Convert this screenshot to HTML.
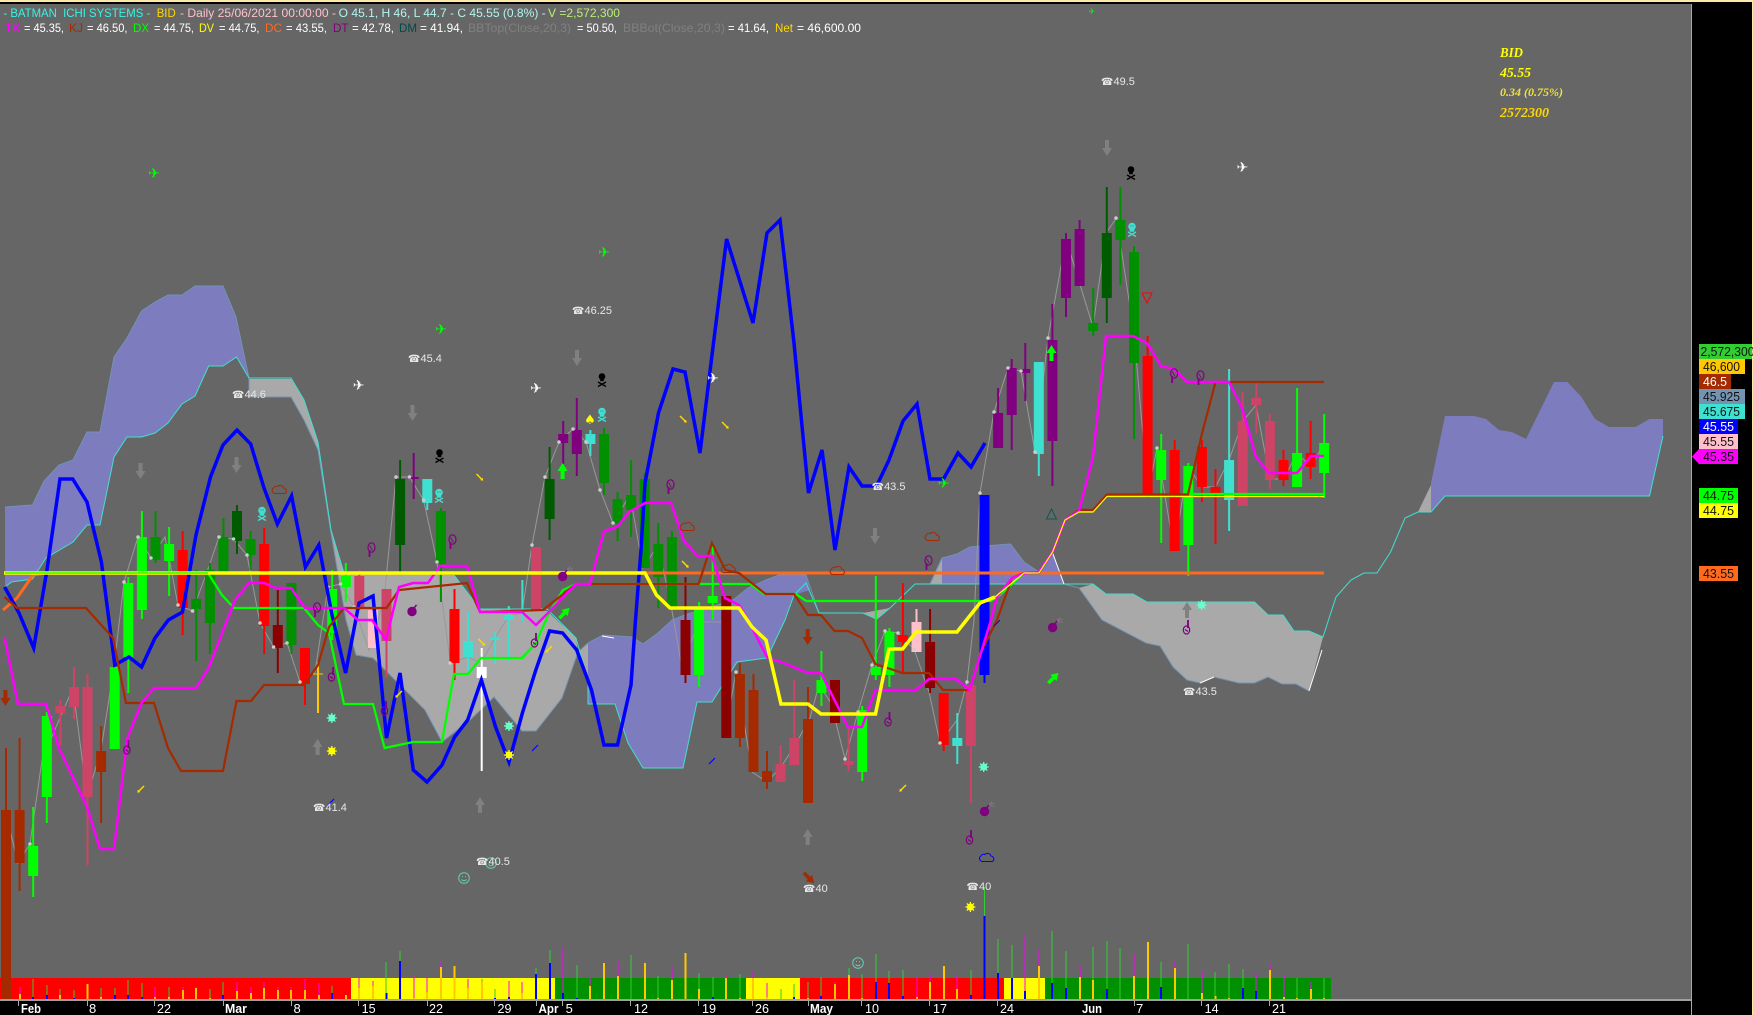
<!DOCTYPE html>
<html><head><meta charset="utf-8"><title>BATMAN ICHI SYSTEMS</title>
<style>
html,body{margin:0;padding:0;background:#666;width:1753px;height:1015px;overflow:hidden}
svg{display:block}
text{font-family:"Liberation Sans","DejaVu Sans",sans-serif}
.h{font-size:12px}
.ax{font-size:13px;fill:#fff}
.axb{font-size:13px;fill:#fff;font-weight:bold}
.p{font-size:11px;fill:#e8e8e8}
.l{font-size:13px}
.s{font-family:"Liberation Serif",serif;font-style:italic;font-weight:bold;font-size:14px}
.g{font-family:"DejaVu Sans",sans-serif}
</style></head><body>
<svg width="1753" height="1015" viewBox="0 0 1753 1015" xmlns="http://www.w3.org/2000/svg">
<defs>
<path id="dn" d="M-2-8h4v8h3l-5 8-5-8h3z"/>
<path id="ar" d="M-2 8v-8h-3l5-8 5 8h-3v8z"/>
<path id="cl" fill="none" stroke-width="1" d="M-4 4.500a3 3 0 0 1-1.500-5.500a3 3 0 0 1 4-1.500a3.500 3.500 0 0 1 6 1.500a3 3 0 0 1 1.500 5.500z"/>
<g id="bomb"><circle cx="0" cy="1.500" r="4.700" fill="#800080"/><path d="M2-2l2.500-3" stroke="#800080" stroke-width="1.600"/><path d="M5-5l5-2M5-4l6 0M5-6l3-3" stroke="#a890a8" stroke-width=".8" stroke-dasharray="1 1" fill="none"/></g>
<g id="star"><circle r="3"/><path stroke-width="1.300" d="M0-5V5M-5 0H5M-3.600-3.600L3.600 3.600M-3.600 3.600L3.600-3.600"/></g>
<g id="smile" fill="none" stroke="#66cdaa" stroke-width="1"><circle r="5.300"/><path d="M-2.500 1.500q2.500 2.500 5 0"/><path d="M-2-1.500h1M1-1.500h1"/></g>
<g id="hand" fill="none" stroke="#800080" stroke-width="1.200"><ellipse cx="-.5" cy="3" rx="3.200" ry="4"/><path d="M1-7v8" stroke-width="1.800"/><path d="M-2 2.500l3 2"/></g>
<g id="mush" fill="none" stroke="#800080" stroke-width="1.200"><ellipse cx=".5" cy="-2.500" rx="3.500" ry="4.700"/><path d="M-1.500-4.500l3 5" stroke-width=".8"/><path d="M-1.500 0v7" stroke-width="1.800"/></g>
<g id="ya"><path d="M-3-3L3 3" stroke-width="1.500"/><path d="M1 3l2.500.5L3 1z" stroke-width=".5"/></g>
<g id="ba"><path d="M-3 3L3-3" stroke-width="1.100"/></g>
<g id="sk"><circle cy="-3.500" r="3.300"/><rect x="-1.800" y="-1" width="3.600" height="2.200"/><path fill="none" stroke-width="1.300" d="M-4 2L4 6.500M4 2L-4 6.500"/></g>
<g id="sk2"><circle cy="-3.500" r="3.300"/><rect x="-1.800" y="-1" width="3.600" height="2.200"/><path fill="none" stroke-width="1.300" d="M-4 2L4 6.500M4 2L-4 6.500"/><path d="M-1.500-4h.8M.7-4h.8" stroke="#666" stroke-width="1.300" fill="none"/></g>
</defs>
<rect width="1753" height="1015" fill="#666"/>

<!-- Ichimoku clouds -->
<g stroke="none">
<polygon fill="#7c7cbe" points="5,507 32.500,505 44,481 59,465 73,460 87,432 100,432 114,357 127,338 141.600,311 155,302 168,295 182,295 195,286 223,286 236,317 249,378 236.500,357 223,366 208.600,366 195,396 182,404 168,423 155,433 141.600,437 127,437 114,457 100,525 87,525 73,542 46,558 32.500,579 11.500,582 5,587"/>
<polygon fill="#a9a9a9" points="249,379 291,379 304,400 318,442 331,530 344,573 454,575 480,609 547,611 576,638 578,652 562,698 536,731 522,731 494,697 470,720 442,742 425,710 402,687 373,658 356,655 346,620 331,533 318,450 304,420 291,397 249,397"/>
<polygon fill="#a9a9a9" points="578,652 588,643 588,680"/>
<polygon fill="#7c7cbe" points="588,643 603,635 632,637 643,644 658,633 672,620 685,615 733,600 748,588 766,580 779,575 806,575 810,590 794,595 785,620 767,658 737,662 712,702 697,702 683,768 643,768 628,743 615,704 588,704"/>
<polygon fill="#a9a9a9" points="863,613 876.600,619 890,608"/>
<polygon fill="#a9a9a9" points="930,584 942,558 942,584"/>
<polygon fill="#7c7cbe" points="942,558 957,554 970,547 1010.500,544 1024,562 1039,572 1052.600,553 1064,584 942,584"/>
<polygon fill="#a9a9a9" points="1093,584 1106,594 1133,594 1147,602 1254.500,602 1268,615 1283,615 1294,631 1309,631 1323,637 1309,691 1296,684 1282,684 1268,677 1254.500,683 1239,683 1214,677 1200,683 1187,680 1173,667 1160,646 1146,643 1102,620 1079,588"/>
<polygon fill="#a9a9a9" points="1418,512 1431,485 1431,512"/>
<polygon fill="#7c7cbe" points="1431,483 1445,416 1474,416 1486,419 1499,430 1512,432 1526,439 1554,382 1567.500,382 1581.500,397 1595,419 1609,427 1635.500,427 1649.500,419 1663,419 1663,436 1649.500,496 1445,496 1431,512"/>
</g>
<path fill="none" stroke="#7393b3" stroke-width="1" d="M5 507L32.500 505 44 481 59 465 73 460 87 432 100 432 114 357 127 338 141.600 311 155 302 168 295 182 295 195 286 223 286 236 317 249 378V397H291L304 420 318 450 331 533 346 620 356 655 373 658 402 687 425 710 442 742 470 720 494 697 522 731 536 731 562 698 578 652 588 643 603 635 632 637 643 644 658 633 672 620 685 615 733 600 748 588 766 580 779 575 806 575 819 613M863 613L876.600 619 890 608M930 584L942 558 957 554 970 547 1010.500 544 1024 562 1039 572 1052.600 553 1064 584 1079 588 1102 620 1146 643 1160 646 1173 667 1187 680 1200 683 1214 677 1239 683 1254.500 683 1268 677 1282 684 1296 684 1309 691"/>
<path fill="none" stroke="#40e0d0" stroke-width="1" d="M5 587L11.500 582 32.500 579 46 558 73 542 87 525 100 525 114 457 127 437 141.600 437 155 433 168 423 182 404 195 396 208.600 366 223 366 236.500 357 249 378H291L304 400 318 442 331 530 344 573M454 575L480 609H547L576 638 588 680V704H615L628 743 643 768H683L697 702H712L737 662 767 658 785 620 794 595 806 583 819 613H863L876.600 619 890 608 915 584H1093L1106 594H1133L1147 602H1254.500L1268 615H1283L1294 631H1309L1323 637 1336 597 1351 580 1364 573H1377L1390.600 552 1405 518 1418 512H1431L1445 496H1649.500L1663 436"/>
<path fill="none" stroke="#fff" stroke-width="1" d="M1200 683L1214 677M1309 691L1322 650M602 636L614 638M1052.600 553L1064 584"/>

<!-- zig-zag -->
<path fill="none" stroke="#999" stroke-width="1" d="M5 810L18 863 30 844 42 760 59 720 73 688 87 797 101 750 114 667 124 582 138 537 151 558 165 537 178 605 192.500 611 207 572 219 537 233.500 539 247 555 260 623 273.600 647 287 643 300 682 315 672 328 587 340.600 584 354 607 369 650 384 600 396 477 409.500 477 423.600 500 437 562 450.400 663 468 657 481 663 495.600 637 509 616 522 613 532 545 545 477 559 442 573 429 586 442 600 490 613 523 630 495 643 568 658 545 671 605 681 663 700 622 722 622 725 733 736 672 752 772 767 782 781 767 794 747 810 718 819 685 831 703 845 759 858 712 872 665 885 631 898 633 914 649 929 692 940 743 957 720 967 682 974 620 980 493 994 412 1008 368 1021 371 1035 452 1048 338 1066 239 1093 327 1106 233 1116.500 218 1134 333 1148 493 1157 448 1174 550 1188 466 1201.600 487 1215.600 487 1229 460 1243 421 1256 405 1270 479 1284 479 1297 453 1311 467 1324 443"/>

<!-- bottom strip -->
<rect x="0" y="978" width="351" height="21" fill="#f00"/>
<rect x="351" y="978" width="204" height="21" fill="#ff0"/>
<rect x="555" y="978" width="191" height="21" fill="#009000"/>
<rect x="746" y="978" width="54" height="21" fill="#ff0"/>
<rect x="800" y="978" width="204" height="21" fill="#f00"/>
<rect x="1004" y="978" width="41" height="21" fill="#ff0"/>
<rect x="1045" y="978" width="286" height="21" fill="#009000"/>
<path fill="none" stroke="#32cd32" stroke-width="1" d="M33 979V999M47 985V999M60 989V999M74 990V999M101 988V999M115 988V999M128 980V999M142 983V999M169 987V999M210 989V999M223 982V999M332 986V999M400 951V999M386 962V999M482 979V999M495 989V999M536 968V999M550 950V999M577 965V999M631 955V999M658 976V999M699 973V999M713 977V999M740 974V999M781 989V999M794 984V999M808 982V999M821 977V999M849 968V999M862 974V999M876 954V999M889 971V999M903 970V999M971 970V999M984.500 888V999M998 939V999M1012 945V999M1052 931V999M1066 951V999M1093 947V999M1107 941V999M1120 948V999M1161 962V999M1188 944V999M1215 972V999M1229 964V999M1243 969V999M1297 978V999M1324 978V999"/>
<path fill="none" stroke="#f0f" stroke-width="1" d="M20 987V999M155 987V999M183 987V999M196 987V999M237 982V999M251 987V999M264 982V999M278 987V999M291 987V999M305 979V999M319 983V999M359 977V999M373 981V999M414 975V999M427 978V999M441 962V999M468 979V999M509 981V999M522 982V999M563 948V999M590 978V999M604 963V999M618 962V999M672 968V999M726 975V999M753 972V999M767 983V999M835 982V999M917 977V999M930 974V999M957 976V999M1025 936V999M1039 949V999M1080 965V999M1134 954V999M1175 962V999M1202 971V999M1256 973V999M1270 963V999M1284 976V999M1311 982V999"/>
<path fill="none" stroke="#ffc800" stroke-width="2" d="M20 994V999M60 995V999M87.500 984V999M101 997V999M155 997V999M169 997V999M183 990V999M196 988V999M210 998V999M237 991V999M251 993V999M264 988V999M278 990V999M291 990V999M305 990V999M319 995V999M346 995V999M359 988V999M373 986V999M414 998V999M427 992V999M441 967V999M454.500 966V999M468 988V999M482 982V999M522 993V999M590 986V999M604 963V999M618 976V999M645 963V999M658 998V999M672 980V999M685.500 953V999M699 989V999M726 978V999M740 998V999M753 978V999M767 997V999M808 998V999M835 984V999M849 975V999M862 998V999M917 997V999M930 982V999M944 966V999M957 989V999M1039 966V999M1080 977V999M1093 980V999M1134 976V999M1148 942V999M1175 968V999M1202 993V999M1215.500 996V999M1229 998V999M1270 970V999M1284 997V999M1297 998V999M1311 989V999M1324 998V999"/>
<path fill="none" stroke="#00f" stroke-width="2" d="M33 997V999M47 995V999M74 998V999M115 995V999M128 995V999M142 997V999M223 995V999M332 993V999M386.500 993V999M400 961V999M495 998V999M509 997V999M536 974V999M550 963V999M563 993V999M577 998V999M713 997V999M794 997V999M821 996V999M876 982V999M889 983V999M903 996V999M971 995V999M984.500 916V1000M998 973V999M1012 978V999M1025 991V999M1052 983V999M1066 988V999M1107 989V999M1161 987V999M1243 988V999M1256 991V999"/>

<!-- candles -->
<g fill="none">
<path stroke="#0f0" stroke-width="2" d="M33.200 807V897M46.800 712V823M128.300 577V693M141.900 511V619M169.100 527V596M332.200 570V640M345.800 563V602M699.100 602V687M712.700 545V620M821.400 651V706M862.200 706V781M875.800 576V680M889.400 628V687M1161.200 434V543M1188.300 463V576M1297.100 388V487M1324.200 414V498"/>
<path stroke="#0f0" stroke-width="10" d="M33.200 846V876M46.800 716V797M114.700 667V749M128.300 583V657M141.900 537V610M169.100 544V561M332.200 589V633M345.800 576V587M699.100 607V675M712.700 596V603M821.400 680V693M862.200 710V772M875.800 667V675M889.400 632V675M1161.200 450V480M1188.300 466V545M1297.100 453V487M1324.200 443V473"/>
<path stroke="#009000" stroke-width="2" d="M155.500 511V563M196.300 570V661M209.900 563V654M223.400 518V571M250.600 531V570M291.400 583V654M440.900 508V602M604 428V495M617.600 492V541M631.100 460V537M644.700 473V568M658.300 523V608M671.900 531V608M1093.200 288V336M1120.400 187V285M1134 246V439"/>
<path stroke="#009000" stroke-width="10" d="M155.500 537V560M196.300 599V609M209.900 570V623M223.400 537V571M250.600 539V555M291.400 583V645M440.900 511V564M604 434V483M617.600 499V523M631.100 495V510M644.700 479V568M658.300 544V577M671.900 537V608M1093.200 323V331M1120.400 220V240M1134 252V363"/>
<path stroke="#005a00" stroke-width="2" d="M237 505V554M400.100 460V572M549.600 447V540M1106.800 187V323"/>
<path stroke="#005a00" stroke-width="10" d="M237 511V541M400.100 479V545M549.600 479V519M1106.800 233V298"/>
<path stroke="#f00" stroke-width="2" d="M182.700 531V635M264.200 528V654M305 648V705M454.500 589V680M902.900 583V673M943.700 693V751M1147.600 336V498M1174.700 440V551M1201.900 440V502M1215.500 469V544M1283.500 450V486M1310.600 421V479"/>
<path stroke="#f00" stroke-width="10" d="M182.700 550V608M264.200 544V626M305 648V684M454.500 609V663M902.900 635V642M943.700 693V745M1147.600 356V494M1174.700 450V551M1201.900 447V487M1215.500 487V493M1283.500 460V480M1310.600 453V467"/>
<path stroke="#8b0000" stroke-width="2" d="M277.800 590V673M685.500 577V683M726.300 596V738M835 680V723M930.100 609V693"/>
<path stroke="#8b0000" stroke-width="10" d="M277.800 625V648M685.500 620V675M726.300 596V738M835 680V723M930.100 642V688"/>
<path stroke="#a52a00" stroke-width="2" d="M6 748V1000M19.600 738V891M101.100 726V823M739.900 663V747M753.500 674V772M767 751V789M808 687V803"/>
<path stroke="#a52a00" stroke-width="10" d="M6 810V1000M19.600 810V863M101.100 751V772M739.900 674V738M753.500 690V772M767 771V782M808 719V803"/>
<path stroke="#cd4466" stroke-width="2" d="M60.400 700V745M74 667V719M87.500 674V865M359.300 570V610M386.500 589V677M780.600 745V782M794.200 680V765M848.600 727V771M970.900 685V803M1242.700 392V506M1256.300 383V433M1269.900 414V489"/>
<path stroke="#cd4466" stroke-width="10" d="M60.400 706V713M74 687V707M87.500 687V797M359.300 576V608M386.500 589V641M536 547V610M780.600 764V782M794.200 738V765M848.600 761V765M970.900 685V746M1242.700 421V506M1256.300 398V405M1269.900 421V480"/>
<path stroke="#800080" stroke-width="2" d="M413.700 453V499M563.200 421V464M576.800 398V476M998.100 388V448M1011.700 359V450M1025.300 343V401M1052.400 304V486M1066 233V317M1079.600 220V286"/>
<path stroke="#800080" stroke-width="10" d="M413.700 477V479M563.200 434V443M576.800 430V454M998.100 413V448M1011.700 368V415M1025.300 369V373M1052.400 340V441M1066 239V298M1079.600 229V286"/>
<path stroke="#40e0d0" stroke-width="2" d="M427.300 479V510M468.100 612V672M495.200 632V664M508.800 606V662M522.400 580V621M590.400 430V456M957.300 713V764M1038.800 362V476M1229.100 369V531"/>
<path stroke="#40e0d0" stroke-width="10" d="M427.300 479V503M468.100 641V657M495.200 638V640M508.800 615V620M590.400 434V444M957.300 738V746M1038.800 362V454M1229.100 460V500"/>
<path stroke="#ffc0cb" stroke-width="10" d="M372.900 610V648M916.500 622V652"/>
<path stroke="#ffc0cb" stroke-width="2" d="M916.500 609V622"/>
<path stroke="#00f" stroke-width="10" d="M984.500 495V675"/><path stroke="#00f" stroke-width="2" d="M984.500 675V683"/>
<path stroke="#fff" stroke-width="2" d="M481.700 648V771"/><path stroke="#fff" stroke-width="10" d="M481.700 667V678"/>
<path stroke="#ffc800" stroke-width="2" d="M318 662V713"/><path stroke="#ffc800" stroke-width="1" d="M313 674H323"/>
</g>
<path fill="none" stroke="#ccc" stroke-width="3.500" stroke-linecap="round" d="M30 844h0M124 582h0M138 537h0M151 558h0M178 605h0M192.500 611h0M219 537h0M233.500 539h0M247 555h0M260 623h0M273.600 647h0M287 643h0M300 682h0M328 587h0M340.600 584h0M354 607h0M396 477h0M409.500 477h0M423.600 500h0M437 562h0M450 663h0M532 545h0M545 477h0M559 442h0M573 429h0M586 442h0M600 490h0M613 523h0M736 672h0M845 759h0M858 712h0M872 665h0M885 631h0M898 633h0M914 649h0M940 743h0M967 682h0M980 493h0M994 412h0M1008 368h0M1021 371h0M1035 452h0M1048 338h0M1116 218h0M1157 448h0"/>

<!-- lines -->
<g fill="none" stroke-linejoin="miter">
<path stroke="#ff6a1f" stroke-width="3" d="M3 610L17 598 33 575 44 573H1324"/>
<path stroke="#00f" stroke-width="3.500" d="M4.600 587L19 613 33.700 648 47 570 60 479H72.700L87 502 101.400 562 114.800 665 129 657 141.600 667 155 638 168.400 620 182.500 612 196 535 210.500 477 223 445 237 430 250.700 444 264 488 277.400 524 291.600 496 305.400 567 318.800 545 332 615 345.600 673 359 603 373 596 386.500 738 400 673 413.300 770 427 782 442 765 454.600 737 467.700 720 481.400 680 495.600 727 509 762 522.400 713 535.800 670 549.500 631 562.600 633 576.700 650 591.500 690 604 745H617.500L631 685 635.500 620 641 550 645 483 658.500 413 673 369 685 372 700 453 713 347 726.600 239 753 323 767 233 780 220 794 343 808.500 493 822 450 835 550 849 467 862 486H876.600L889 460 903 421 917 404 930 479H943.500L958 453 971 467 985 443"/>
<path stroke="#0f0" stroke-width="2.300" d="M208 573L222 595 234 608H304L318 625 329 633 344 704H373L384.600 748 413 742H442L454 674H468L481 658H522L536 643 549 613 563 590 576 584H750L764 594H796L806 601H991L1000 595 1024 573H1039L1052.600 552 1065 520 1079 511H1093L1107 495H1188M1188 494H1324V498"/>
<path stroke="#a52a00" stroke-width="2.200" d="M4.600 597L17 608H86L113 638 126 703H154L168 748 181 771H223L236.500 701H251L264 685H304L318 665 329 627 344 608H386.500L399 590 467 583 480 612 543 610 576 584H698.600L712 543 725.400 570 739 573 765.600 594H794L808 615H821L834.500 631H848L862 638 875.400 664 902.600 673H929L943 690H969.600L982 650 997 620 1012 578 1024 573H1039L1052.600 552 1065 520 1079 510H1093L1107 494.500H1188L1201.600 435 1215.600 382H1324"/>
<path stroke="#f0f" stroke-width="2.500" d="M4.600 638L18 704H46L59 748 87 807 100 849H114L127.400 738 141.600 703 154 688H196L208.600 668 235 600 249 583H264L276 588H291L305 608H344L358 620H372L386 640 399 587 413 583H428L440 566H467L480 612H522L536 625 549 612 576 584H590L604 531 617 527 629 512 645 503H671L684 541 697.500 556H712L725 598 739 605 748 620 767.500 658 781 662 808 673H821L848 727H862L875.500 690H916L929 679H956L969.600 690 991 620 997 597 1012 578 1026 573 1039 572 1052.600 552 1065 520 1079 511 1093 457 1106 336H1133L1147 343 1161 366 1174 369 1187 382H1229L1242 408 1256 457 1269 473H1297L1311 456H1324"/>
<path stroke="#ff0" stroke-width="3.500" d="M4 573H645L656.500 595 670 608H739L752 627 766 640 781 704H808L821 714H875.500L889 649H902.600L916 632H957L966.500 620 980 603 995 597"/>
<path stroke="#ff0" stroke-width="1.200" d="M995 597L1024 573H1039L1052.600 552 1065 520 1079 512H1093L1107 496.500H1324"/>
<path stroke="#0f0" stroke-width="1.300" d="M5 573H208"/>
</g>

<!-- icons -->
<g fill="#808080">
<use href="#dn" x="140.500" y="471"/><use href="#dn" x="236.500" y="465"/><use href="#dn" x="412.500" y="413"/><use href="#dn" x="577" y="358"/><use href="#dn" x="875" y="536"/><use href="#dn" x="1107" y="148"/>
<use href="#ar" x="317.600" y="747"/><use href="#ar" x="480" y="805"/><use href="#ar" x="807.700" y="837"/><use href="#ar" x="1187" y="610"/>
</g>
<g fill="#0f0">
<use href="#ar" x="562.600" y="471"/><use href="#ar" x="1051.500" y="353"/>
<use href="#ar" transform="translate(564.500 613) rotate(45) scale(.9)"/><use href="#ar" transform="translate(1053.400 678) rotate(45) scale(.9)"/>
</g>
<g fill="#a52a00">
<use href="#dn" x="5.400" y="698"/><use href="#dn" x="807.700" y="637"/>
<use href="#dn" transform="translate(809 878) rotate(-45) scale(.9)"/>
</g>
<g stroke="#a52a00" fill="none">
<use href="#cl" x="279" y="489"/><use href="#cl" x="687" y="526"/><use href="#cl" x="728" y="568"/><use href="#cl" x="837" y="570"/><use href="#cl" x="932" y="536"/>
</g>
<use href="#cl" x="986.400" y="857" stroke="#00f" fill="none"/>
<use href="#bomb" x="412" y="610"/><use href="#bomb" x="562.600" y="575"/><use href="#bomb" x="984.500" y="810"/><use href="#bomb" x="1052.600" y="626"/>
<g fill="#66ffcc" stroke="#66ffcc"><use href="#star" x="331.800" y="718"/><use href="#star" x="509" y="726"/><use href="#star" x="983.700" y="767"/><use href="#star" x="1201.600" y="605"/></g>
<g fill="#ff0" stroke="#ff0"><use href="#star" x="331.800" y="751"/><use href="#star" x="509" y="755"/><use href="#star" x="970.400" y="907"/></g>
<use href="#smile" x="464" y="878"/><use href="#smile" x="491" y="863"/><use href="#smile" x="858" y="963"/>
<use href="#hand" x="127.400" y="747"/><use href="#hand" x="332" y="674"/><use href="#hand" x="385" y="708"/><use href="#hand" x="535" y="640"/><use href="#hand" x="888.500" y="719"/><use href="#hand" x="970" y="837"/><use href="#hand" x="1187" y="627"/>
<use href="#mush" x="371" y="550"/><use href="#mush" x="452" y="542"/><use href="#mush" x="316.500" y="610"/><use href="#mush" x="670" y="487"/><use href="#mush" x="928" y="563"/><use href="#mush" x="1173.600" y="376"/><use href="#mush" x="1200" y="378"/>
<path fill="none" stroke="#0f5a50" stroke-width="1" d="M1051.500 509L1056.500 519H1046.500z"/>
<path fill="none" stroke="#f00" stroke-width="1" d="M1147 303L1142 293H1152z"/>
<g stroke="#ffd700" fill="#ffd700">
<use href="#ya" x="683" y="419"/><use href="#ya" x="725" y="425"/><use href="#ya" x="685" y="564"/><use href="#ya" x="479.500" y="477"/><use href="#ya" x="481.400" y="642"/>
<use href="#ya" transform="translate(141 789) rotate(90)"/><use href="#ya" transform="translate(399 694) rotate(90)"/><use href="#ya" transform="translate(549 649) rotate(90)"/><use href="#ya" transform="translate(903 788) rotate(90)"/>
</g>
<g stroke="#00f"><use href="#ba" x="535" y="748"/><use href="#ba" x="331" y="802"/><use href="#ba" x="712" y="761"/><use href="#ba" x="997" y="623"/></g>
<g fill="#000" stroke="#000" stroke-width="0"><use href="#sk" x="439.500" y="456" stroke="#000"/><use href="#sk" x="602" y="380" stroke="#000"/><use href="#sk" x="1131" y="173" stroke="#000"/></g>
<g fill="#40e0d0" stroke="#40e0d0"><use href="#sk2" x="439" y="496"/><use href="#sk2" x="262" y="514"/><use href="#sk2" x="602" y="415"/><use href="#sk2" x="1132" y="230"/></g>

<g class="g" text-anchor="middle" font-size="14">
<g fill="#fff"><text class="g" x="358.600" y="390">✈</text><text class="g" x="536" y="393">✈</text><text class="g" x="713" y="383">✈</text><text class="g" x="1242.400" y="172">✈</text></g>
<g fill="#0f0"><text class="g" x="441" y="334">✈</text><text class="g" x="604" y="257">✈</text><text class="g" x="154" y="178">✈</text><text class="g" x="943.600" y="488">✈</text><text class="g" x="1092" y="14" font-size="8">✈</text></g>
<text class="g" x="590" y="424" fill="#ff0" font-size="13">♠</text>
</g>

<!-- price notes -->
<g class="p">
<text class="p" x="232" y="398"><tspan class="g" font-size="10">☎</tspan>44.6</text>
<text class="p" x="408" y="362"><tspan class="g" font-size="10">☎</tspan>45.4</text>
<text class="p" x="572" y="314"><tspan class="g" font-size="10">☎</tspan>46.25</text>
<text class="p" x="313" y="811"><tspan class="g" font-size="10">☎</tspan>41.4</text>
<text class="p" x="476" y="865"><tspan class="g" font-size="10">☎</tspan>40.5</text>
<text class="p" x="871.600" y="490"><tspan class="g" font-size="10">☎</tspan>43.5</text>
<text class="p" x="803" y="892"><tspan class="g" font-size="10">☎</tspan>40</text>
<text class="p" x="966.500" y="890"><tspan class="g" font-size="10">☎</tspan>40</text>
<text class="p" x="1183" y="695"><tspan class="g" font-size="10">☎</tspan>43.5</text>
<text class="p" x="1101" y="85"><tspan class="g" font-size="10">☎</tspan>49.5</text>
</g>

<!-- header -->
<rect x="0" y="0" width="1753" height="2" fill="#ffe9a8"/>
<rect x="0" y="2" width="1753" height="2" fill="#000"/>
<text class="h" x="3.400" y="17" fill="#33f5e5" textLength="150" lengthAdjust="spacingAndGlyphs" xml:space="preserve">- BATMAN  ICHI SYSTEMS - </text>
<text class="h" x="156.700" y="17" fill="#ffd700" textLength="19" lengthAdjust="spacingAndGlyphs">BID</text>
<text class="h" x="180" y="17" fill="#ffc0cb" textLength="156" lengthAdjust="spacingAndGlyphs">- Daily 25/06/2021 00:00:00 -</text>
<text class="h" x="338.700" y="17" fill="#b0f5f0" textLength="207" lengthAdjust="spacingAndGlyphs">O 45.1, H 46, L 44.7 - C 45.55 (0.8%) -</text>
<text class="h" x="548" y="17" fill="#b8f070" textLength="72" lengthAdjust="spacingAndGlyphs">V =2,572,300</text>

<text class="h" x="4.600" y="32" fill="#f0f" textLength="16" lengthAdjust="spacingAndGlyphs">TK</text>
<text class="h" x="24" y="32" fill="#fff" textLength="40" lengthAdjust="spacingAndGlyphs">= 45.35,</text>
<text class="h" x="69" y="32" fill="#a52a00" textLength="14" lengthAdjust="spacingAndGlyphs">KJ</text>
<text class="h" x="87" y="32" fill="#fff" textLength="40.500" lengthAdjust="spacingAndGlyphs">= 46.50,</text>
<text class="h" x="133" y="32" fill="#0f0" textLength="16" lengthAdjust="spacingAndGlyphs">DX</text>
<text class="h" x="154" y="32" fill="#fff" textLength="40" lengthAdjust="spacingAndGlyphs">= 44.75,</text>
<text class="h" x="199" y="32" fill="#ff0" textLength="15" lengthAdjust="spacingAndGlyphs">DV</text>
<text class="h" x="219" y="32" fill="#fff" textLength="40.500" lengthAdjust="spacingAndGlyphs">= 44.75,</text>
<text class="h" x="265" y="32" fill="#ff6a1f" textLength="17" lengthAdjust="spacingAndGlyphs">DC</text>
<text class="h" x="286" y="32" fill="#fff" textLength="41" lengthAdjust="spacingAndGlyphs">= 43.55,</text>
<text class="h" x="333" y="32" fill="#800080" textLength="15.500" lengthAdjust="spacingAndGlyphs">DT</text>
<text class="h" x="352" y="32" fill="#fff" textLength="42" lengthAdjust="spacingAndGlyphs">= 42.78,</text>
<text class="h" x="399" y="32" fill="#004a4a" textLength="18" lengthAdjust="spacingAndGlyphs">DM</text>
<text class="h" x="420" y="32" fill="#fff" textLength="43" lengthAdjust="spacingAndGlyphs">= 41.94,</text>
<text class="h" x="468" y="32" fill="#808080" textLength="103" lengthAdjust="spacingAndGlyphs">BBTop(Close,20,3)</text>
<text class="h" x="577" y="32" fill="#fff" textLength="40" lengthAdjust="spacingAndGlyphs">= 50.50,</text>
<text class="h" x="623" y="32" fill="#808080" textLength="102" lengthAdjust="spacingAndGlyphs">BBBot(Close,20,3)</text>
<text class="h" x="728" y="32" fill="#fff" textLength="41" lengthAdjust="spacingAndGlyphs">= 41.64,</text>
<text class="h" x="775" y="32" fill="#ffd700" textLength="18" lengthAdjust="spacingAndGlyphs">Net</text>
<text class="h" x="797" y="32" fill="#fff" textLength="64" lengthAdjust="spacingAndGlyphs">= 46,600.00</text>

<text class="s" x="1500" y="57" fill="#ff0" textLength="23" lengthAdjust="spacingAndGlyphs">BID</text>
<text class="s" x="1500" y="77" fill="#ff0" textLength="31" lengthAdjust="spacingAndGlyphs">45.55</text>
<text class="s" x="1500" y="96" fill="#f0e040" textLength="63" lengthAdjust="spacingAndGlyphs" style="font-size:12px">0.34 (0.75%)</text>
<text class="s" x="1500" y="117" fill="#ffd700" textLength="49" lengthAdjust="spacingAndGlyphs">2572300</text>

<!-- frame -->
<rect x="0" y="999" width="1692" height="2" fill="#a0a0a0"/>
<rect x="0" y="1001" width="1692" height="14" fill="#000"/>
<rect x="1691" y="4" width="62" height="1011" fill="#000"/>
<rect x="1691" y="4" width="1" height="1011" fill="#a9a9a9"/>
<rect x="1752" y="0" width="1" height="1015" fill="#ffe9a8"/>

<!-- axis -->
<path fill="none" stroke="#aaa" stroke-width="1" d="M18.500 1001v5M87.500 1001v5M154.500 1001v5M223.500 1001v5M291.500 1001v5M358.500 1001v5M427.500 1001v5M494.500 1001v5M536.500 1001v5M562.500 1001v5M630.500 1001v5M698.500 1001v5M752.500 1001v5M808.500 1001v5M861.500 1001v5M929.500 1001v5M997.500 1001v5M1134.500 1001v5M1201.500 1001v5M1269.500 1001v5"/>
<text class="axb" x="21" y="1013" textLength="20" lengthAdjust="spacingAndGlyphs">Feb</text>
<text class="ax" x="89" y="1013">8</text>
<text class="ax" x="157" y="1013" textLength="14" lengthAdjust="spacingAndGlyphs">22</text>
<text class="axb" x="225" y="1013" textLength="22" lengthAdjust="spacingAndGlyphs">Mar</text>
<text class="ax" x="293.500" y="1013">8</text>
<text class="ax" x="361.600" y="1013" textLength="14" lengthAdjust="spacingAndGlyphs">15</text>
<text class="ax" x="429" y="1013" textLength="14" lengthAdjust="spacingAndGlyphs">22</text>
<text class="ax" x="497.500" y="1013" textLength="14" lengthAdjust="spacingAndGlyphs">29</text>
<text class="axb" x="538.500" y="1013" textLength="20" lengthAdjust="spacingAndGlyphs">Apr</text>
<text class="ax" x="565.600" y="1013">5</text>
<text class="ax" x="634" y="1013" textLength="14" lengthAdjust="spacingAndGlyphs">12</text>
<text class="ax" x="702" y="1013" textLength="14" lengthAdjust="spacingAndGlyphs">19</text>
<text class="ax" x="755" y="1013" textLength="14" lengthAdjust="spacingAndGlyphs">26</text>
<text class="axb" x="810" y="1013" textLength="23" lengthAdjust="spacingAndGlyphs">May</text>
<text class="ax" x="865" y="1013" textLength="14" lengthAdjust="spacingAndGlyphs">10</text>
<text class="ax" x="933" y="1013" textLength="14" lengthAdjust="spacingAndGlyphs">17</text>
<text class="ax" x="1000" y="1013" textLength="14" lengthAdjust="spacingAndGlyphs">24</text>
<text class="axb" x="1082" y="1013" textLength="20" lengthAdjust="spacingAndGlyphs">Jun</text>
<text class="ax" x="1136" y="1013">7</text>
<text class="ax" x="1204.600" y="1013" textLength="14" lengthAdjust="spacingAndGlyphs">14</text>
<text class="ax" x="1272" y="1013" textLength="14" lengthAdjust="spacingAndGlyphs">21</text>

<!-- right labels -->
<rect x="1699" y="344" width="53" height="15" fill="#32cd32"/>
<rect x="1699" y="359" width="46" height="15" fill="#ffc800"/>
<rect x="1699" y="374" width="32" height="15" fill="#a52a00"/>
<rect x="1699" y="389" width="46" height="15" fill="#7393b3"/>
<rect x="1699" y="404" width="46" height="15" fill="#40e0d0"/>
<rect x="1699" y="419" width="39" height="15" fill="#00f"/>
<rect x="1699" y="434" width="39" height="15" fill="#ffc0cb"/>
<polygon points="1692,456.500 1699,449 1738,449 1738,464 1699,464" fill="#f0f"/>
<rect x="1699" y="488" width="39" height="15" fill="#0f0"/>
<rect x="1699" y="503" width="39" height="15" fill="#ff0"/>
<rect x="1699" y="566" width="39" height="15" fill="#ff6a1f"/>
<g>
<text class="l" x="1700.500" y="356" fill="#111" textLength="54" lengthAdjust="spacingAndGlyphs">2,572,300</text>
<text class="l" x="1703" y="371" fill="#111" textLength="37" lengthAdjust="spacingAndGlyphs">46,600</text>
<text class="l" x="1703" y="386" fill="#fff" textLength="24" lengthAdjust="spacingAndGlyphs">46.5</text>
<text class="l" x="1703" y="401" fill="#111" textLength="37" lengthAdjust="spacingAndGlyphs">45.925</text>
<text class="l" x="1703" y="416" fill="#111" textLength="37" lengthAdjust="spacingAndGlyphs">45.675</text>
<text class="l" x="1703" y="431" fill="#fff" textLength="31" lengthAdjust="spacingAndGlyphs">45.55</text>
<text class="l" x="1703" y="446" fill="#111" textLength="31" lengthAdjust="spacingAndGlyphs">45.55</text>
<text class="l" x="1703" y="461" fill="#111" textLength="31" lengthAdjust="spacingAndGlyphs">45.35</text>
<text class="l" x="1703" y="500" fill="#111" textLength="31" lengthAdjust="spacingAndGlyphs">44.75</text>
<text class="l" x="1703" y="515" fill="#111" textLength="31" lengthAdjust="spacingAndGlyphs">44.75</text>
<text class="l" x="1703" y="578" fill="#111" textLength="31" lengthAdjust="spacingAndGlyphs">43.55</text>
</g>
</svg>
</body></html>
